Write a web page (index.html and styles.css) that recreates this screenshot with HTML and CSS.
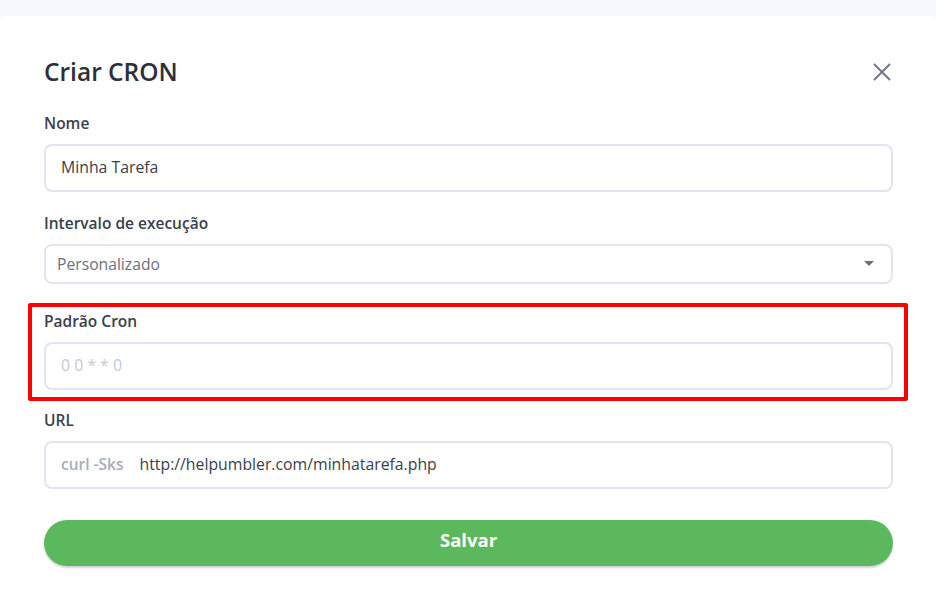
FILE: index.html
```html
<!DOCTYPE html>
<html lang="pt-BR">
<head>
    <meta charset="UTF-8">
    <meta name="viewport" content="width=device-width, initial-scale=1.0">
    <title>Criar CRON</title>
    <link rel="stylesheet" href="styles.css">
</head>
<body>
    <div class="modal">
        <div class="modal-header">
            <h2>Criar CRON</h2>
            <button class="close" aria-label="Fechar">
                <svg width="18" height="18" viewBox="0 0 18 18">
                    <path d="M1 1L17 17M17 1L1 17" stroke="#6b7385" stroke-width="1.8" fill="none"/>
                </svg>
            </button>
        </div>

        <div class="field">
            <label>Nome</label>
            <input type="text" class="input" value="Minha Tarefa">
        </div>

        <div class="field">
            <label>Intervalo de execução</label>
            <div class="select">
                <span>Personalizado</span>
                <span class="caret"></span>
            </div>
        </div>

        <div class="field highlight">
            <label>Padrão Cron</label>
            <input type="text" class="input" placeholder="0 0 * * 0">
        </div>

        <div class="field">
            <label>URL</label>
            <div class="input prefixed">
                <span class="prefix">curl -Sks</span>
                <span>http://helpumbler.com/minhatarefa.php</span>
            </div>
        </div>

        <button class="save">Salvar</button>
    </div>
</body>
</html>
```

FILE: styles.css
```css
body {
    margin: 0;
    font-family: "Open Sans", "Noto Sans", sans-serif;
    background-color: #f5f8fd;
    color: #3a3f4b;
}
.modal {
    background: white;
    margin-top: 16px;
    width: 936px;
    box-sizing: border-box;
    border-radius: 6px 6px 0 0;
    padding: 36px 43px 40px 44px;
    min-height: 594px;
}
.modal-header {
    display: flex;
    justify-content: space-between;
    align-items: center;
    height: 40px;
    margin-bottom: 22px;
}
.modal-header h2 {
    margin: 0 0 2px;
    font-size: 24.5px;
    font-weight: 600;
    color: #2b303b;
}
.close {
    border: none;
    background: none;
    padding: 0;
    margin-right: 2px;
    cursor: pointer;
    display: flex;
}
.field {
    margin-bottom: 22px;
}
.field label {
    display: block;
    font-size: 15.5px;
    font-weight: 600;
    color: #3a3f4b;
    margin-bottom: 12px;
    line-height: 18px;
}
.input {
    display: flex;
    align-items: center;
    box-sizing: border-box;
    width: 100%;
    height: 48px;
    border: 2px solid #e1e5f2;
    border-radius: 8px;
    padding: 0 15px 3px;
    font-family: inherit;
    font-size: 15.8px;
    color: #3a3f4b;
    outline: none;
}
.input::placeholder {
    color: #c4c8d6;
}
.select {
    display: flex;
    align-items: center;
    justify-content: space-between;
    box-sizing: border-box;
    height: 40px;
    border: 2px solid #e1e5f2;
    border-radius: 8px;
    padding: 0 17px 1px 11px;
    font-size: 15.7px;
    color: #6c7180;
}
.caret {
    width: 0;
    height: 0;
    border-left: 5px solid transparent;
    border-right: 5px solid transparent;
    border-top: 5px solid #6b6f7a;
}
.highlight {
    border: 4px solid #ff0000;
    border-radius: 2px;
    margin: -3px -15px 10px -16px;
    padding: 5px 11px 7px 12px;
}
.prefixed {
    gap: 16px;
}
.prefix {
    color: #a8adbc;
    font-weight: 600;
    font-size: 15.5px;
}
.save {
    display: block;
    width: 100%;
    height: 46px;
    margin-top: 31px;
    padding: 0 0 8px;
    border: none;
    border-radius: 23px;
    background-color: #5cb85c;
    color: white;
    font-family: inherit;
    font-size: 18.5px;
    font-weight: 700;
    box-shadow: 0 2px 2px rgba(0,0,0,0.18);
    cursor: pointer;
}
```
